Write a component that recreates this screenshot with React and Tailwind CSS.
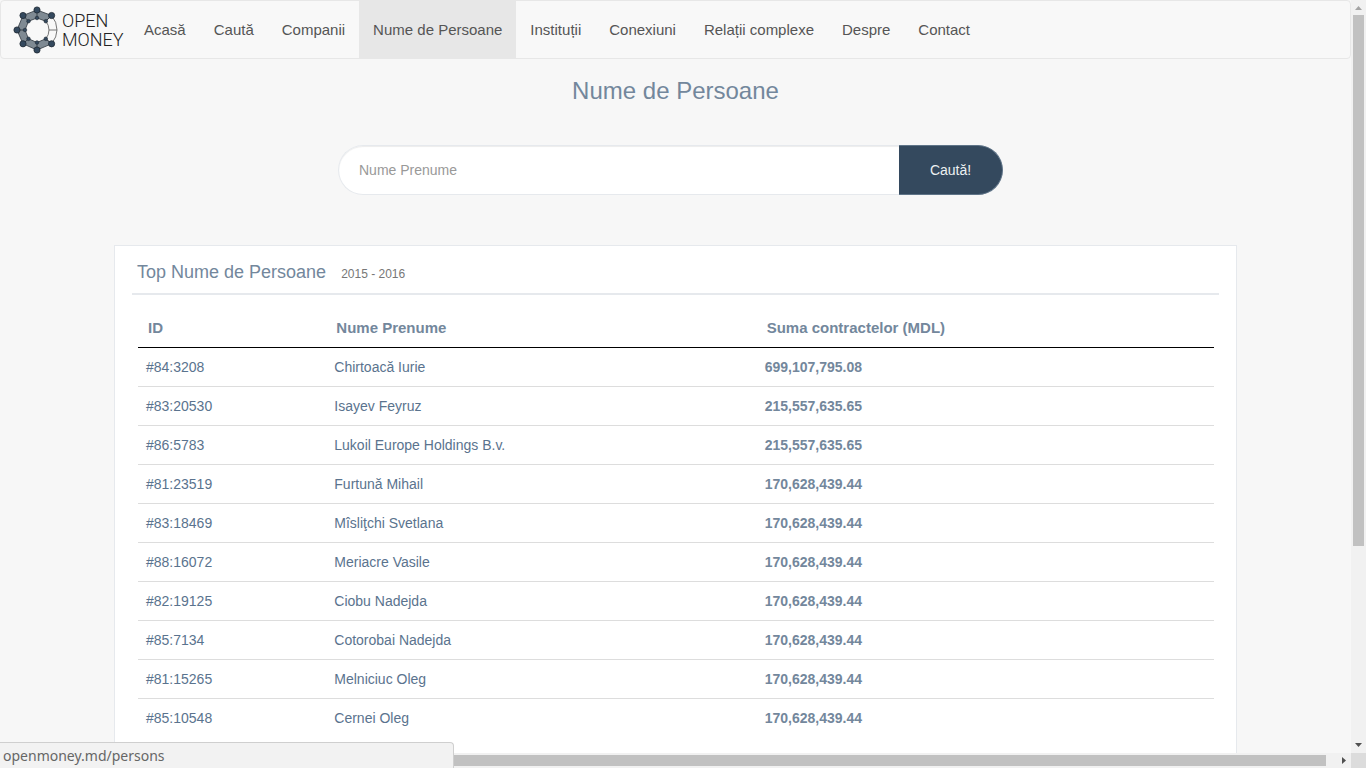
import React from "react";

const NAV = [
  "Acasă",
  "Caută",
  "Companii",
  "Nume de Persoane",
  "Instituții",
  "Conexiuni",
  "Relații complexe",
  "Despre",
  "Contact",
];

const ROWS = [
  ["#84:3208", "Chirtoacă Iurie", "699,107,795.08"],
  ["#83:20530", "Isayev Feyruz", "215,557,635.65"],
  ["#86:5783", "Lukoil Europe Holdings B.v.", "215,557,635.65"],
  ["#81:23519", "Furtună Mihail", "170,628,439.44"],
  ["#83:18469", "Mîsliţchi Svetlana", "170,628,439.44"],
  ["#88:16072", "Meriacre Vasile", "170,628,439.44"],
  ["#82:19125", "Ciobu Nadejda", "170,628,439.44"],
  ["#85:7134", "Cotorobai Nadejda", "170,628,439.44"],
  ["#81:15265", "Melniciuc Oleg", "170,628,439.44"],
  ["#85:10548", "Cernei Oleg", "170,628,439.44"],
];

const OUTER = [[24, 4], [10, 9.5], [4, 24], [10, 37.8], [24, 44], [38.6, 37.8], [38.6, 9.5]];
const INNER = [[24, 12], [15.5, 15.2], [12, 24], [15.5, 32.8], [24, 36.5], [32.8, 32.8], [32.8, 15.2]];

function Logo() {
  return (
    <a href="#" className="flex items-center" aria-label="Open Money">
      <svg viewBox="0 0 48 48" className="size-12" aria-hidden="true">
        <path
          d="M38.6 9.5L24 4L10 9.5L4 24L10 37.8L24 44L38.6 37.8L32.8 32.8L24 36.5L15.5 32.8L12 24L15.5 15.2L24 12L32.8 15.2Z"
          fill="#7f8a93"
          stroke="#3c444c"
          strokeWidth="0.9"
        />
        <path
          d="M38.6 9.5Q44 16 44 24Q44 31 38.6 37.8M32.8 15.2Q36 19 36 24Q36 29 32.8 32.8M36 24H44"
          fill="none"
          stroke="#666"
          strokeWidth="0.9"
        />
        {OUTER.map(([x, y], i) => (
          <g key={i}>
            <line x1={x} y1={y} x2={INNER[i][0]} y2={INNER[i][1]} stroke="#333c46" strokeWidth="0.9" />
            <circle cx={x} cy={y} r="3.1" fill="#34495e" stroke="#1f2933" strokeWidth="0.8" />
            <circle cx={INNER[i][0]} cy={INNER[i][1]} r="1.8" fill="#34495e" stroke="#1f2933" strokeWidth="0.6" />
          </g>
        ))}
      </svg>
      <span className="ml-px flex flex-col pt-px font-[Roboto,sans-serif] text-lg leading-[19px] font-light text-[#222]">
        <span>OPEN</span>
        <span>MONEY</span>
      </span>
    </a>
  );
}

function Navbar() {
  return (
    <nav className="flex h-[59px] rounded border border-[#e7e7e7] bg-[#f8f8f8]">
      <div className="flex w-[129px] shrink-0 items-center pl-3">
        <Logo />
      </div>
      <ul className="flex">
        {NAV.map((label) => (
          <li key={label} className="flex">
            <a
              href="#"
              aria-current={label === "Nume de Persoane" ? "page" : undefined}
              className="flex items-center px-3.5 pt-0.5 text-[15px] whitespace-nowrap text-[#555] aria-[current=page]:bg-[#e7e7e7]"
            >
              {label}
            </a>
          </li>
        ))}
      </ul>
    </nav>
  );
}

function Search() {
  return (
    <form className="mt-[39px] mr-[10px] flex h-[50px] justify-center" onSubmit={(e) => e.preventDefault()}>
      <input
        type="text"
        aria-label="Nume Prenume"
        placeholder="Nume Prenume"
        className="w-[561px] rounded-l-[25px] border border-r-0 border-[#e6e9ed] bg-white px-5 text-sm shadow-[inset_0_1px_1px_rgba(0,0,0,0.075)] outline-none placeholder:text-[#999]"
      />
      <button
        type="submit"
        className="w-[104px] rounded-r-[25px] border border-l-0 border-[#5f7488] bg-[#34495e] text-sm text-[#ecf0f1]"
      >
        Caută!
      </button>
    </form>
  );
}

function TopPersons() {
  return (
    <section className="mx-[114px] mt-[50px] border border-[#e6e9ed] bg-white px-[17px] pb-20">
      <header className="flex h-[49px] items-baseline border-b-2 border-[#e6e9ed] px-[5px] pt-3 text-[#73879c]">
        <h2 className="text-lg leading-7">Top Nume de Persoane</h2>
        <small className="ml-[15px] text-xs text-[#777]">2015 - 2016</small>
      </header>
      <div className="mr-[5px] ml-1.5 pt-3">
        <table className="w-full table-fixed border-collapse text-left text-sm leading-[22px]">
          <colgroup>
            <col className="w-[17.5%]" />
            <col className="w-[40%]" />
            <col />
          </colgroup>
          <thead>
            <tr className="h-10 border-b border-black text-[15px] text-[#73879c]">
              <th className="px-2.5 pt-0.5">ID</th>
              <th className="px-2.5 pt-0.5">Nume Prenume</th>
              <th className="px-2.5 pt-0.5">Suma contractelor (MDL)</th>
            </tr>
          </thead>
          <tbody>
            {ROWS.map(([id, name, sum]) => (
              <tr key={id} className="h-[39px] border-b border-[#ddd] last:border-b-0">
                <td className="px-2">
                  <a href="#" className="text-[#5a738e]">{id}</a>
                </td>
                <td className="px-2">
                  <a href="#" className="text-[#5a738e]">{name}</a>
                </td>
                <td className="px-2 font-bold text-[#73879c]">{sum}</td>
              </tr>
            ))}
          </tbody>
        </table>
      </div>
    </section>
  );
}

function VerticalScrollbar() {
  return (
    <div className="flex flex-col items-center bg-[#f1f1f1]" aria-hidden="true">
      <svg viewBox="0 0 15 15" className="size-[15px] shrink-0">
        <path d="M4 10H11L7.5 6Z" fill="#a3a3a3" />
      </svg>
      <div className="flex w-[11px] grow flex-col">
        <div className="h-[73.4%] bg-[#c1c1c1]" />
      </div>
      <svg viewBox="0 0 15 15" className="size-[15px] shrink-0">
        <path d="M4 5H11L7.5 9Z" fill="#505050" />
      </svg>
    </div>
  );
}

function HorizontalScrollbar() {
  return (
    <div className="flex items-center bg-[#f1f1f1]" aria-hidden="true">
      <div className="ml-[15px] h-[11px] grow bg-[#c1c1c1]" />
      <svg viewBox="0 0 15 15" className="ml-[10px] size-[15px] shrink-0">
        <path d="M6 4V11L10 7.5Z" fill="#505050" />
      </svg>
    </div>
  );
}

export default function App() {
  return (
    <div className="relative grid h-screen grid-cols-[minmax(0,1fr)_15px] grid-rows-[minmax(0,1fr)_15px] overflow-hidden bg-[#f7f7f7] font-['Liberation_Sans',Arial,sans-serif]">
      <main className="overflow-hidden">
        <Navbar />
        <h1 className="mt-[17px] text-center text-2xl leading-[30px] text-[#73879c]">Nume de Persoane</h1>
        <Search />
        <TopPersons />
      </main>
      <VerticalScrollbar />
      <HorizontalScrollbar />
      <div className="bg-[#dcdcdc]" />
      <div className="absolute bottom-0 left-0 flex h-[26px] w-[454px] items-center rounded-tr border-t border-r border-[#cfcfcf] bg-[#f2f2f2] pl-[3px] font-['Noto_Sans',sans-serif] text-sm text-[#666]">
        openmoney.md/persons
      </div>
    </div>
  );
}
